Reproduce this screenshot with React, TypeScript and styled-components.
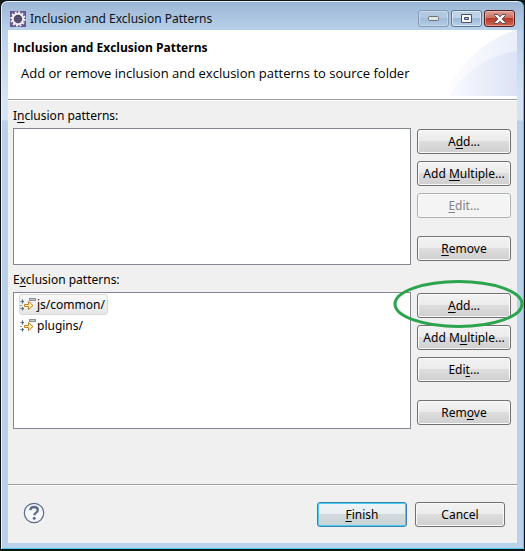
import React, { useState } from "react";
import styled, { createGlobalStyle, css } from "styled-components";

const GlobalStyle = createGlobalStyle`
  *, *::before, *::after { box-sizing: border-box; }
  body { margin: 0; background: #14161a; }
  body, button { font-family: "Noto Sans", "Open Sans", sans-serif; font-size: 12px; color: #000; }
  button { padding: 0; }
`;

const Window = styled.main`
  min-height: 100vh;
  display: flex;
  flex-direction: column;
  padding: 2px 7px 6px 6px;
  border: 1px solid #101418;
  border-width: 1px 1px 2px 1px;
  border-radius: 7px 7px 0 0;
  background: linear-gradient(#9ab5d4 0, #b9d1ea 30px, #d3e2f4 90px, #d5e4f5 119px, #b9d1ea 120px);
  box-shadow: inset 1px 0 #e4f2fb, inset -1px 0 #48cdee, inset 0 -1px #48cdee, inset 0 1px #e4f2fb;
`;

const TitleBar = styled.header`
  display: flex;
  height: 27px;
  padding: 0 2px 0 3px;
`;

const Caption = styled.div`
  flex: 1;
  display: flex;
  align-items: center;
  gap: 4px;
  padding-top: 4px;
  font-size: 12px;
  line-height: 18px;
  color: #0b121c;
  white-space: nowrap;
`;

const WindowControls = styled.div`
  display: flex;
  gap: 2px;
  padding-top: 7px;
`;

const ControlButton = styled.button<{ $tone: "faint" | "plain" | "close" }>`
  display: grid;
  place-items: center;
  width: 31px;
  height: 17px;
  border: 1px solid #5b7593;
  border-radius: 3px;
  background: linear-gradient(#bed2e8 0 45%, #9eb9d6 50%, #b9cfe6);
  box-shadow: inset 0 0 0 1px rgba(255, 255, 255, 0.5);
  ${({ $tone }) =>
    $tone === "faint" &&
    css`
      border-color: #829ab4;
      background: linear-gradient(#b3c9e0 0 45%, #a3bdd9 50%, #b3cae3);
      box-shadow: inset 0 0 0 1px rgba(255, 255, 255, 0.3);
    `}
  ${({ $tone }) =>
    $tone === "close" &&
    css`
      border-color: #551f27;
      background: linear-gradient(#dc9f94 0, #cc7264 45%, #b43a29 50%, #cd6752);
      box-shadow: inset 0 0 0 1px rgba(255, 210, 200, 0.5);
    `}
`;

const Client = styled.div`
  flex: 1;
  display: flex;
  flex-direction: column;
  margin: 0 0 0 1px;
  background: #f0f0f0;
`;

const Banner = styled.section`
  display: flex;
  height: 70px;
  border-bottom: 1px solid #9c9f9f;
  background: #fff;
`;

const BannerText = styled.div`
  flex: 1;
  padding: 9px 0 0 5px;
  font-family: "Open Sans", "Noto Sans", sans-serif;
  font-size: 13px;
  white-space: nowrap;
`;

const Heading = styled.h1`
  margin: 0;
  font-size: 12px;
  line-height: 18px;
`;

const Description = styled.p`
  margin: 7px 0 0 8px;
  line-height: 18px;
`;

const BannerArt = styled.svg`
  flex: none;
  margin-left: -80px;
`;

const Content = styled.div`
  flex: 1;
  display: flex;
  flex-direction: column;
  padding: 6px 6px 0 5px;
  border-top: 1px solid #fff;
`;

const Group = styled.section`
  margin-bottom: 6px;
`;

const GroupLabel = styled.h2`
  margin: 0 0 4px;
  font-size: 12px;
  font-weight: 400;
  line-height: 17px;
`;

const GroupBody = styled.div`
  display: flex;
  gap: 6px;
`;

const PatternList = styled.ul`
  flex: 1;
  display: flex;
  flex-direction: column;
  align-items: flex-start;
  margin: 0;
  padding: 1px 5px;
  list-style: none;
  border: 1px solid #828790;
  background: #fff;
`;

const PatternItem = styled.li<{ $selected: boolean }>`
  display: flex;
  align-items: center;
  gap: 1px;
  height: 21px;
  padding: 0 2px 0 0;
  line-height: 19px;
  border: 1px solid transparent;
  border-radius: 3px;
  cursor: default;
  ${({ $selected }) =>
    $selected && css`
      border-color: #d9d9d9;
      background: linear-gradient(#f9f9f9, #e6e6e6);
    `}
`;

const ButtonColumn = styled.div`
  display: flex;
  flex-direction: column;
  gap: 7px;
  width: 94px;
  padding: 1px 0 4px;
`;

const PushButton = styled.button<{ $apart?: boolean; $primary?: boolean }>`
  display: block;
  width: 100%;
  height: 25px;
  margin-top: ${({ $apart }) => ($apart ? "11px" : "0")};
  border: 1px solid #707070;
  border-radius: 3px;
  background: linear-gradient(#f3f3f3 0, #ebebeb 49%, #dddddd 50%, #cfcfcf);
  box-shadow: inset 0 0 0 1px #fafafa;
  line-height: 23px;
  white-space: nowrap;
  ${({ $primary }) =>
    $primary && css`
      border-color: #3c7fb1;
      background: linear-gradient(#f0f5f6 0, #e5eef0 49%, #d2dcdf 50%, #c9d3d6);
      box-shadow: inset 0 0 0 1px #46cdf0;
    `}
  &:disabled {
    color: #838383;
    border-color: #adb2b5;
    background: #f4f4f4;
  }
`;

const Marked = styled.div`
  position: relative;
`;

const MarkerRing = styled.svg`
  position: absolute;
  top: -14px;
  left: -24px;
  pointer-events: none;
`;

const Footer = styled.footer`
  display: flex;
  justify-content: space-between;
  align-items: center;
  height: 59px;
  padding: 0 12px 0 15px;
  border-top: 1px solid #a0a0a0;
  box-shadow: inset 0 1px #fff;
`;

const FooterActions = styled.div`
  display: grid;
  grid-template-columns: 90px 90px;
  gap: 8px;
`;

const HelpButton = styled.button`
  display: grid;
  padding-bottom: 3px;
  border: 0;
  background: none;
`;

const Mnemonic = styled.span`
  text-decoration: underline;
  text-underline-offset: 2px;
  text-decoration-thickness: 1px;
`;

function Label({ text }: { text: string }) {
  const at = text.indexOf("&");
  if (at < 0) return <>{text}</>;
  return (
    <>
      {text.slice(0, at)}
      <Mnemonic>{text[at + 1]}</Mnemonic>
      {text.slice(at + 2)}
    </>
  );
}

function AppIcon() {
  return (
    <svg width="16" height="16" viewBox="0 0 16 16" aria-hidden="true">
      <rect width="16" height="16" fill="#67568f" />
      <circle cx="8" cy="8" r="6.8" fill="none" stroke="#f4f2f5" strokeWidth="1.8" strokeDasharray="2 1.56" />
      <circle cx="8" cy="8" r="5.2" fill="#4a4666" stroke="#f1eff2" strokeWidth="2" />
      <path d="M5 6.5h6M4.500 8.500h7M5 10.500h6" stroke="#6d6985" strokeWidth=".6" />
    </svg>
  );
}

function PatternIcon() {
  return (
    <svg width="16" height="16" viewBox="0 0 16 16" aria-hidden="true">
      <path d="M0 4.5h4M0 11.5h4M2.5 2v5M2.5 10v4M0 8.5h2" stroke="#8fa0ad" />
      <path d="M2 3.5l2 1-2 1zM2 10.5l2 1-2 1z" fill="#4e6573" stroke="#4e6573" strokeWidth=".6" />
      <rect x="9.5" y="1.5" width="6" height="2" fill="#c5c9c8" stroke="#8d9296" />
      <path d="M4.5 7.5h4v-3l4.500 4-4.500 4v-3h-4z" fill="#fff0b6" stroke="#c0801f" />
    </svg>
  );
}

type Action = { text: string; disabled?: boolean; apart?: boolean; marked?: boolean };

function PatternGroup({ label, items, actions }: { label: string; items: string[]; actions: Action[] }) {
  const [selected, setSelected] = useState(0);
  const id = label.replace(/[^a-z]/gi, "");
  return (
    <Group>
      <GroupLabel id={id}><Label text={label} /></GroupLabel>
      <GroupBody>
        <PatternList role="listbox" aria-labelledby={id} tabIndex={0}>
          {items.map((item, index) => (
            <PatternItem
              key={item}
              role="option"
              aria-selected={index === selected}
              $selected={index === selected}
              onClick={() => setSelected(index)}
            >
              <PatternIcon />
              {item}
            </PatternItem>
          ))}
        </PatternList>
        <ButtonColumn>
          {actions.map(({ text, disabled, apart, marked }) => {
            const button = (
              <PushButton key={text} type="button" disabled={disabled} $apart={apart}>
                <Label text={text} />
              </PushButton>
            );
            return marked ? (
              <Marked key={text}>
                {button}
                <MarkerRing width="131" height="50" viewBox="0 0 131 50" aria-hidden="true">
                  <ellipse cx="65.5" cy="25" rx="63.5" ry="22.5" fill="none" stroke="#2ca34d" strokeWidth="3" />
                </MarkerRing>
              </Marked>
            ) : button;
          })}
        </ButtonColumn>
      </GroupBody>
    </Group>
  );
}

export default function App() {
  return (
    <>
      <GlobalStyle />
      <Window>
        <TitleBar>
          <Caption><AppIcon />Inclusion and Exclusion Patterns</Caption>
          <WindowControls>
            <ControlButton type="button" aria-label="Minimize" $tone="faint">
              <svg width="11" height="5" viewBox="0 0 11 5">
                <rect x=".5" y=".5" width="10" height="4" rx="1" fill="#e5e5df" stroke="#65727f" />
              </svg>
            </ControlButton>
            <ControlButton type="button" aria-label="Maximize" $tone="plain">
              <svg width="11" height="9" viewBox="0 0 11 9">
                <path fillRule="evenodd" d="M.5.5h10v8H.5zM3.5 3.5v2h4v-2z" fill="#f8f8f8" stroke="#4b5167" />
              </svg>
            </ControlButton>
            <ControlButton type="button" aria-label="Close" $tone="close">
              <svg width="12" height="10" viewBox="0 0 12 10">
                <path d="M.5.5h3.3L6 2.8 8.2.5h3.3v1L8.2 5l3.3 3.5v1H8.2L6 7.2 3.8 9.5H.5v-1L3.8 5 .5 1.5z" fill="#f6f6f6" stroke="#5d4854" />
              </svg>
            </ControlButton>
          </WindowControls>
        </TitleBar>
        <Client>
          <Banner>
            <BannerText>
              <Heading>Inclusion and Exclusion Patterns</Heading>
              <Description>Add or remove inclusion and exclusion patterns to source folder</Description>
            </BannerText>
            <BannerArt width="80" height="66" viewBox="0 0 80 66" aria-hidden="true">
              <defs>
                <linearGradient id="outer" x1="0" x2="1">
                  <stop offset="0" stopColor="#fff" />
                  <stop offset="1" stopColor="#e9eef9" />
                </linearGradient>
                <linearGradient id="inner" x1="0" x2="1">
                  <stop offset="0" stopColor="#f8faff" />
                  <stop offset="1" stopColor="#dbe3f5" />
                </linearGradient>
              </defs>
              <path d="M5 66C18 42 43 10 80 0v66z" fill="url(#outer)" />
              <path d="M13 66C27 42 50 25 80 21v45z" fill="url(#inner)" />
            </BannerArt>
          </Banner>
          <Content>
            <PatternGroup
              label="I&nclusion patterns:"
              items={[]}
              actions={[
                { text: "A&dd..." },
                { text: "Add &Multiple..." },
                { text: "&Edit...", disabled: true },
                { text: "&Remove", apart: true },
              ]}
            />
            <PatternGroup
              label="E&xclusion patterns:"
              items={["js/common/", "plugins/"]}
              actions={[
                { text: "&Add...", marked: true },
                { text: "Add M&ultiple..." },
                { text: "Edi&t..." },
                { text: "Rem&ove", apart: true },
              ]}
            />
          </Content>
          <Footer>
            <HelpButton type="button" aria-label="Help">
              <svg width="22" height="22" viewBox="0 0 22 22">
                <circle cx="11" cy="11" r="9.7" fill="#f6f7fa" stroke="#5d6b8c" strokeWidth="1.2" />
                <path d="M7.3 8.2C7.5 5.8 9 5 11 5c2.3 0 3.8 1.2 3.8 3 0 2.9-3.5 2.9-3.5 5.3" fill="none" stroke="#5d6b8c" strokeWidth="2.3" />
                <circle cx="11.2" cy="16.3" r="1.5" fill="#5d6b8c" />
              </svg>
            </HelpButton>
            <FooterActions>
              <PushButton type="button" $primary><Label text="&Finish" /></PushButton>
              <PushButton type="button">Cancel</PushButton>
            </FooterActions>
          </Footer>
        </Client>
      </Window>
    </>
  );
}
